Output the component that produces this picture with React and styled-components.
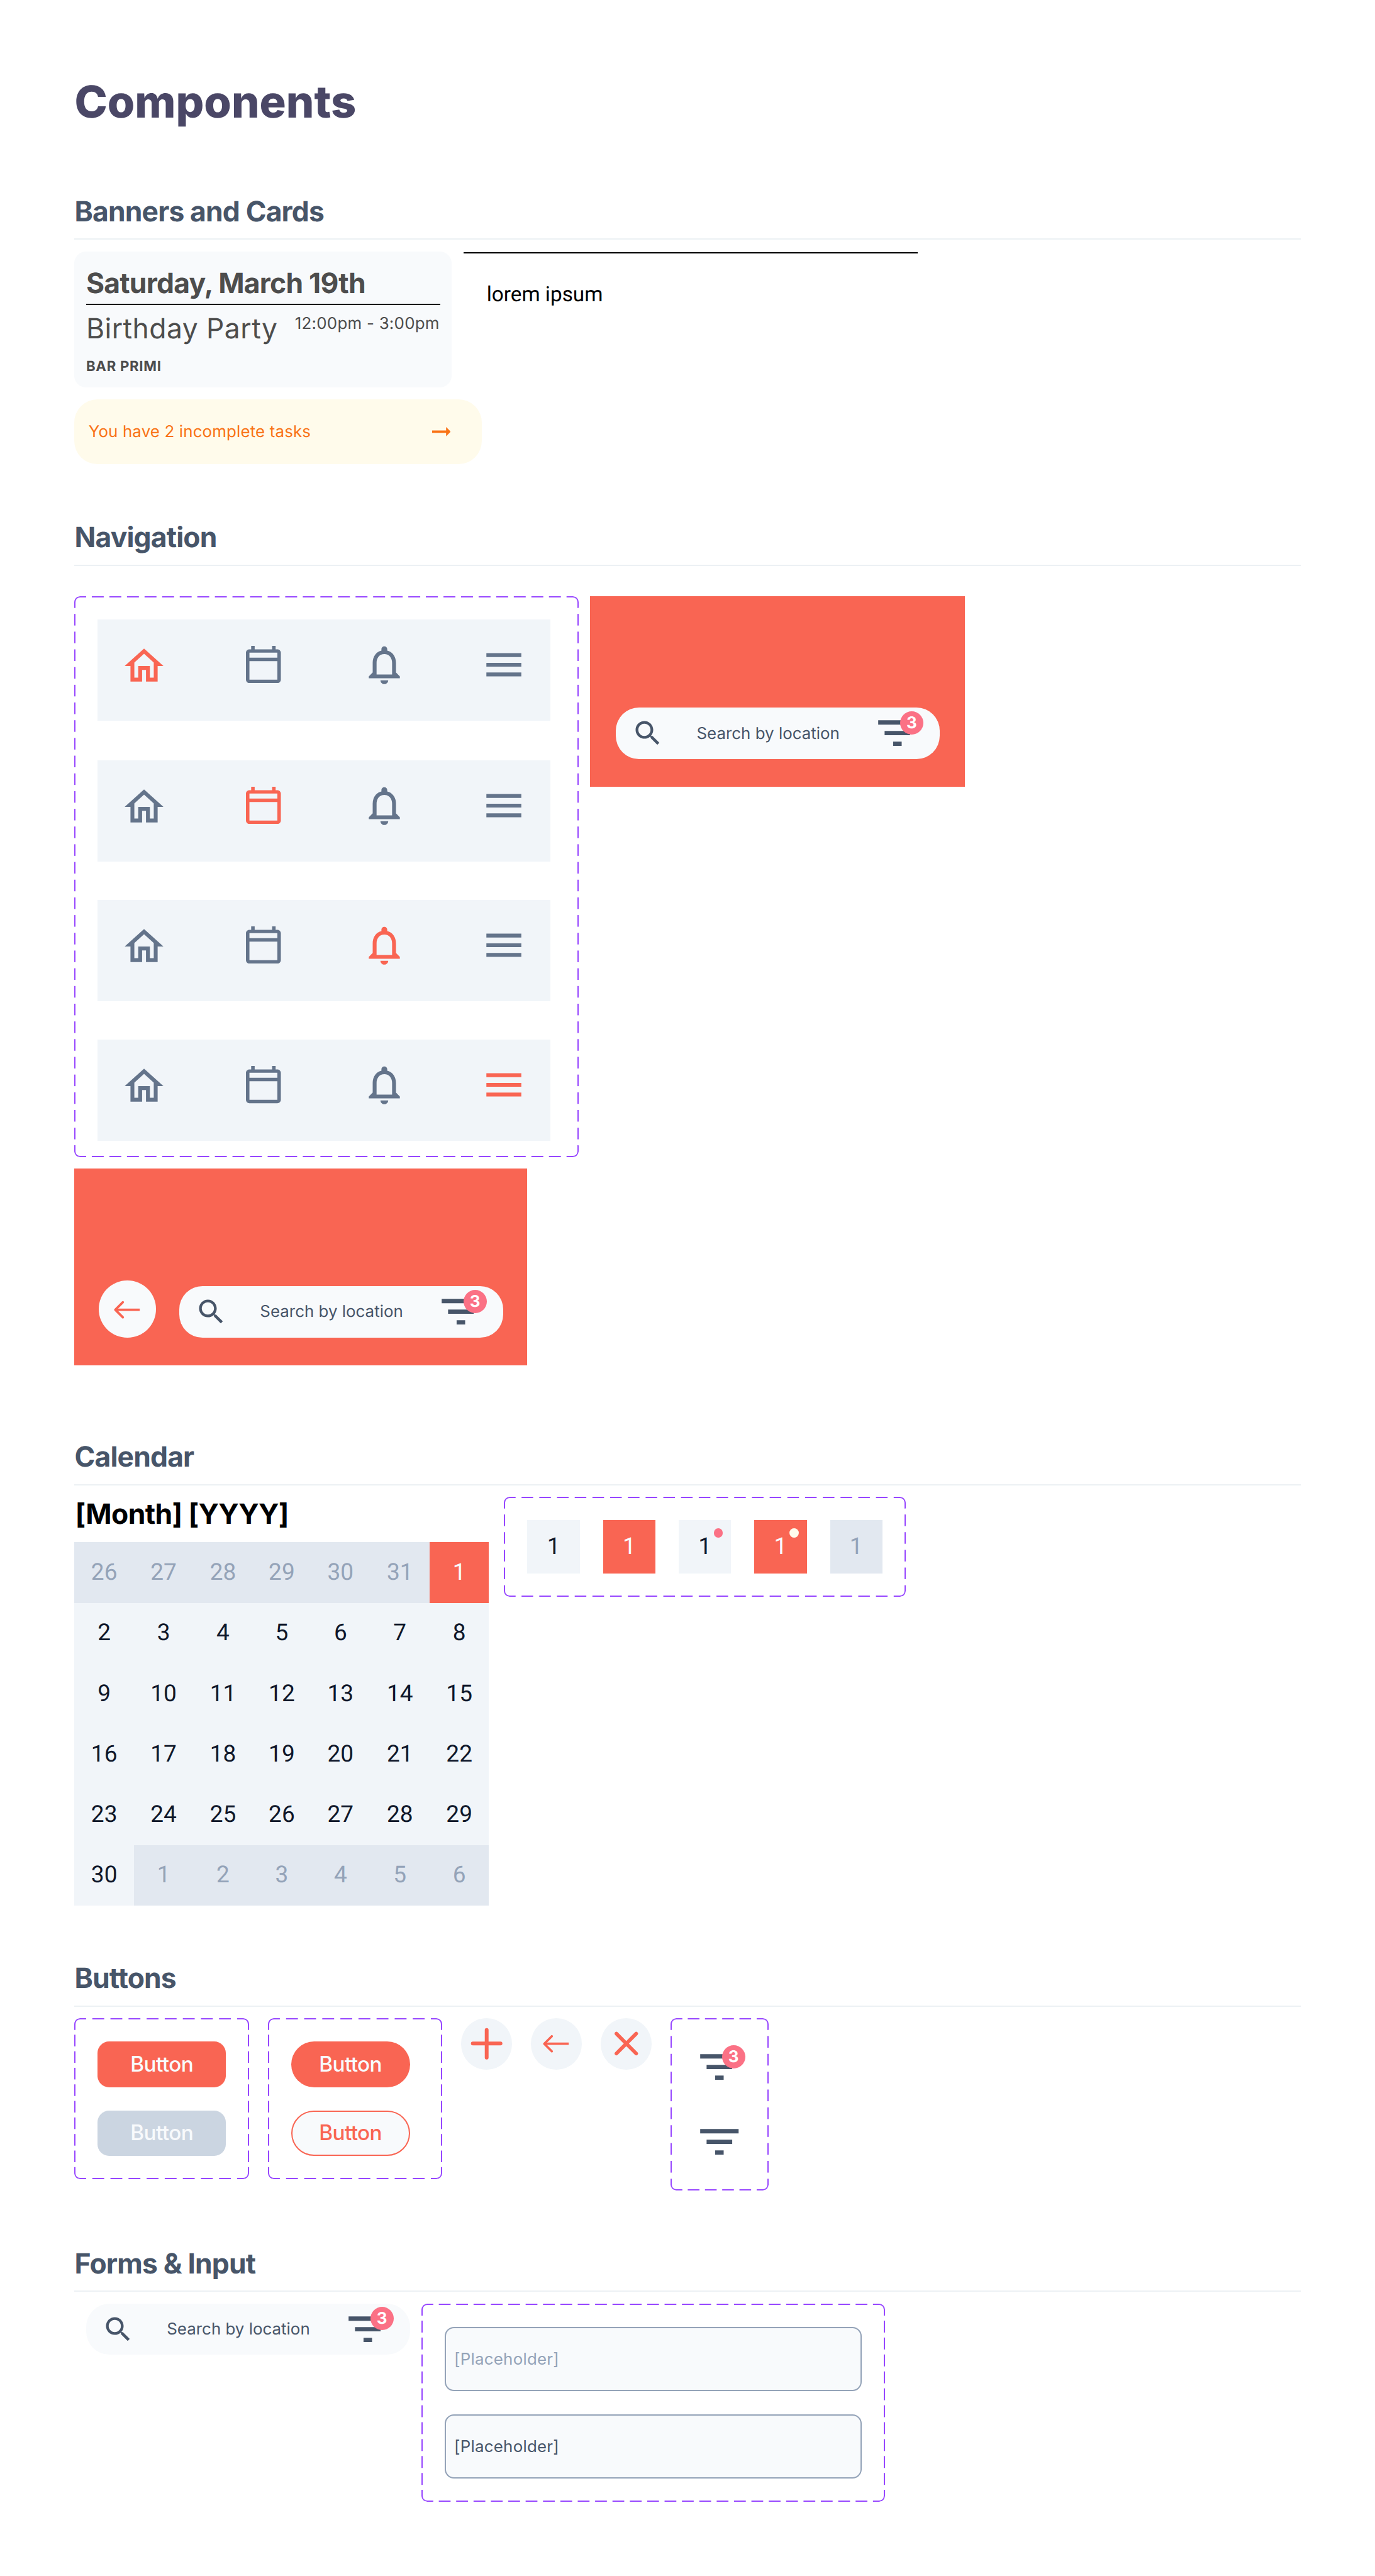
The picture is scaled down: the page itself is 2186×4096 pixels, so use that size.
import React from 'react';
import styled, { createGlobalStyle, css } from 'styled-components';

const SCALE = 2186 / 2362;
const u = (n) => `${+(n * SCALE).toFixed(3)}px`;

const c = {
  coral: '#f96553',
  rose: '#fb7185',
  cream: '#fffbeb',
  orange: '#f97316',
  purple: '#9747ff',
  ink: '#0f172a',
  slate600: '#475569',
  slate500: '#64748b',
  slate400: '#94a3b8',
  slate300: '#cbd5e1',
  slate200: '#e2e8f0',
  slate100: '#f1f5f9',
  slate50: '#f8fafc',
  divider: '#ecf1f4',
  grey: '#4d4d4d',
  title: '#4a4766',
};

const GlobalStyle = createGlobalStyle`
  *, *::before, *::after { box-sizing: border-box; }
  body {
    margin: 0;
    background: #fff;
    font-family: Inter, "Liberation Sans", sans-serif;
    text-rendering: geometricPrecision;
    color: ${c.ink};
  }
  h1, h2, h3, p { margin: 0; }
`;

const Page = styled.main`
  height: ${u(4426)};
  overflow: hidden;
  padding: ${u(130)} ${u(128)} 0;
`;

const PageTitle = styled.h1`
  height: ${u(203)};
  font-size: ${u(76)};
  line-height: ${u(90)};
  font-weight: 800;
  color: ${c.title};
`;

const Section = styled.section`
  margin-bottom: ${u(95)};
  padding-bottom: ${({ $bottom }) => u($bottom ?? 0)};
`;

const SectionTitle = styled.h2`
  height: ${u(79)};
  margin-bottom: ${u(20)};
  padding-top: ${u(1.5)};
  border-bottom: 2px solid ${c.divider};
  font-size: ${u(48)};
  line-height: ${u(58)};
  font-weight: 700;
  letter-spacing: -0.019em;
  color: ${c.slate600};
`;

const Row = styled.div`
  display: flex;
  align-items: flex-start;
  gap: ${({ $gap }) => u($gap ?? 20)};
  margin-top: ${({ $top }) => u($top ?? 0)};
`;

/* Dashed component-set outline: a solid rounded border, cut into dashes by a mask. */
const Frame = styled.div`
  position: relative;
  display: flex;
  flex-direction: ${({ $row }) => ($row ? 'row' : 'column')};
  align-items: flex-start;
  gap: ${u(40)};
  flex: none;
  width: ${({ $w }) => u($w)};
  height: ${({ $h }) => u($h)};
  padding: ${u(40)};

  &::before {
    content: '';
    position: absolute;
    inset: 0;
    border: 2px solid ${c.purple};
    border-radius: ${u(10)};
    pointer-events: none;
    ${({ $w, $h }) => {
      const px = ($w - 20) / Math.round(($w - 20) / 30);
      const py = ($h - 20) / Math.round(($h - 20) / 30);
      const h = `linear-gradient(90deg, #000 ${u(20)}, transparent 0)`;
      const v = `linear-gradient(180deg, #000 ${u(20)}, transparent 0)`;
      const solid = 'linear-gradient(#000, #000)';
      const corner = `${u(20)} ${u(20)}`;
      return css`
        mask-image: ${h}, ${h}, ${v}, ${v}, ${solid}, ${solid}, ${solid}, ${solid};
        mask-size: ${u(px)} 3px, ${u(px)} 3px, 3px ${u(py)}, 3px ${u(py)}, ${corner}, ${corner}, ${corner}, ${corner};
        mask-position: left top, left bottom, left top, right top, left top, right top, left bottom, right bottom;
        mask-repeat: repeat-x, repeat-x, repeat-y, repeat-y, no-repeat, no-repeat, no-repeat, no-repeat;
      `;
    }}
  }
`;

const Icon = styled.svg`
  display: block;
  flex: none;
  width: ${({ $w }) => u($w)};
  height: ${({ $h, $w }) => u($h ?? $w)};
  fill: currentColor;
`;

/* ---------- Banners and cards ---------- */

const EventCard = styled.article`
  width: ${u(648)};
  height: ${u(234)};
  padding: ${u(28)} ${u(20)} 0;
  border-radius: ${u(20)};
  background: ${c.slate50};
  color: ${c.grey};
`;

const EventDate = styled.h3`
  height: ${u(64)};
  border-bottom: 2px solid #000;
  font-size: ${u(48)};
  line-height: ${u(54)};
  font-weight: 700;
  letter-spacing: -0.017em;
`;

const EventRow = styled.div`
  display: flex;
  justify-content: space-between;
  height: ${u(88)};
  padding-top: ${u(12)};
`;

const EventName = styled.p`
  font-size: ${u(48)};
  line-height: ${u(58)};
  letter-spacing: ${u(0.5)};
`;

const EventTime = styled.p`
  padding-top: ${u(3)};
  padding-right: ${u(1)};
  font-size: ${u(28)};
  line-height: ${u(34)};
  letter-spacing: ${u(0.25)};
`;

const EventPlace = styled.p`
  padding-top: ${u(3)};
  font-size: ${u(24)};
  line-height: ${u(30)};
  font-weight: 700;
  letter-spacing: 0.032em;
`;

const TextPanel = styled.div`
  width: ${u(780)};
  margin-top: ${u(1)};
  padding: ${u(51)} ${u(40)} 0;
  border-top: 2px solid #000;
  font: 400 ${u(36)} / ${u(42)} Roboto, "Liberation Sans", sans-serif;
  color: #000;
`;

const Banner = styled.div`
  display: flex;
  align-items: center;
  justify-content: space-between;
  width: ${u(700)};
  height: ${u(112)};
  padding: 0 ${u(54)} 0 ${u(24)};
  border-radius: ${u(40)};
  background: ${c.cream};
  color: ${c.orange};
  font-size: ${u(28)};
  letter-spacing: ${u(0.14)};
`;

/* ---------- Navigation ---------- */

const NavFrame = styled(Frame)`
  gap: ${u(66)};
`;

const NavBar = styled.nav`
  display: flex;
  justify-content: space-between;
  flex: none;
  width: ${u(778)};
  height: ${u(174)};
  padding: ${u(38)} ${u(40)} 0;
  background: ${c.slate100};

  &:first-child { margin-bottom: ${u(2)}; }
`;

const NavItem = styled.span`
  display: flex;
  justify-content: center;
  width: ${u(80)};
  height: ${u(80)};
  padding-top: ${({ $top }) => u($top ?? 0)};
  padding-right: ${({ $nudge }) => u($nudge ?? 0)};
  color: ${({ $active }) => ($active ? c.coral : c.slate500)};
`;

const Header = styled.div`
  display: flex;
  align-items: flex-end;
  flex: none;
  gap: ${u(40)};
  width: ${({ $w }) => u($w)};
  height: ${({ $h }) => u($h)};
  padding: 0 0 ${u(48)} ${({ $left }) => u($left)};
  background: ${c.coral};
`;

const SearchPill = styled.div`
  display: flex;
  align-items: center;
  justify-content: space-between;
  flex: none;
  width: ${u(556)};
  height: ${u(88)};
  padding: 0 ${u(28)} 0 ${u(27)};
  border-radius: ${u(40)};
  background: ${c.slate50};
  color: ${c.slate600};
  font-size: ${u(28)};

  ${({ $inset }) => $inset && css`margin-left: ${u(20)};`}
`;

const Circle = styled.span`
  display: flex;
  align-items: center;
  justify-content: center;
  flex: none;
  width: ${({ $size }) => u($size)};
  height: ${({ $size }) => u($size)};
  border-radius: 50%;
  background: ${({ $light }) => ($light ? c.slate50 : c.slate100)};
  color: ${c.coral};
`;

const FilterBox = styled.span`
  position: relative;
  display: block;
  width: ${u(88)};
  height: ${u(88)};
  color: ${c.slate600};
`;

const Badge = styled.span`
  position: absolute;
  top: ${u(6)};
  right: 0;
  width: ${u(40)};
  height: ${u(40)};
  border-radius: 50%;
  background: ${c.rose};
  color: #fff;
  font-size: ${u(28)};
  line-height: ${u(40)};
  font-weight: 700;
  text-align: center;
`;

/* ---------- Calendar ---------- */

const MonthTitle = styled.h3`
  height: ${u(78)};
  padding: ${u(0.5)} 0 0 ${u(1)};
  font-size: ${u(48)};
  line-height: ${u(58)};
  font-weight: 700;
  letter-spacing: ${u(-0.68)};
  color: #000;
`;

const MonthGrid = styled.div`
  display: grid;
  grid-template-columns: repeat(3, ${u(102)}) ${u(100)} repeat(3, ${u(102)});
  grid-auto-rows: ${u(104)};
`;

const tones = {
  normal: css`background: ${c.slate100}; color: ${c.ink};`,
  active: css`background: ${c.coral}; color: ${c.slate50};`,
  muted: css`background: ${c.slate200}; color: ${c.slate400};`,
};

const Day = styled.span`
  display: flex;
  align-items: center;
  justify-content: center;
  padding-top: 1.5px;
  font: 400 ${u(40)} / ${u(48)} Roboto, "Liberation Sans", sans-serif;
  ${({ $tone }) => tones[$tone]}
`;

const DayVariant = styled(Day)`
  position: relative;
  width: ${u(90)};
  height: ${u(92)};
`;

const Dot = styled.i`
  position: absolute;
  top: ${u(14)};
  left: ${u(60)};
  width: ${u(16)};
  height: ${u(16)};
  border-radius: 50%;
  background: ${({ $light }) => ($light ? c.cream : c.rose)};
`;

/* ---------- Buttons and inputs ---------- */

const Button = styled.button`
  flex: none;
  width: ${({ $pill }) => u($pill ? 204 : 220)};
  height: ${u(78)};
  padding: 0;
  border: ${({ $outline }) => ($outline ? `2px solid ${c.coral}` : 0)};
  border-radius: ${({ $pill }) => u($pill ? 40 : 20)};
  background: ${({ $outline, disabled }) => ($outline ? c.slate50 : disabled ? c.slate300 : c.coral)};
  color: ${({ $outline }) => ($outline ? c.coral : c.slate50)};
  font: 500 ${u(36)} / 1 Inter, "Liberation Sans", sans-serif;
  letter-spacing: -0.018em;
`;

const Input = styled.input`
  display: block;
  flex: none;
  width: ${u(716)};
  height: ${u(110)};
  padding: 0 ${u(14)};
  border: 2px solid ${c.slate400};
  border-radius: ${u(16)};
  outline: 0;
  background: ${c.slate50};
  color: ${c.slate600};
  font: 400 ${u(28)} / 1.2 Inter, "Liberation Sans", sans-serif;
  letter-spacing: ${u(0.25)};

  &::placeholder { color: ${c.slate400}; opacity: 1; }
`;

const HomeIcon = () => (
  <Icon $w={80} viewBox="0 0 24 24">
    <path d="M12 5.69l5 4.5V18h-2v-6H9v6H7v-7.81l5-4.5M12 3L2 12h3v8h6v-6h2v6h6v-8h3L12 3z" />
  </Icon>
);
const CalendarIcon = () => (
  <Icon $w={60} $h={64} viewBox="2 1 20 22" preserveAspectRatio="none">
    <path d="M20 3h-1V1h-2v2H7V1H5v2H4c-1.1 0-2 .9-2 2v16c0 1.1.9 2 2 2h16c1.1 0 2-.9 2-2V5c0-1.1-.9-2-2-2zm0 18H4V10h16v11zm0-13H4V5h16v3z" />
  </Icon>
);
const BellIcon = () => (
  <Icon $w={80} viewBox="0 0 24 24">
    <path d="M12 22c1.1 0 2-.9 2-2h-4c0 1.1.9 2 2 2zm6-6v-5c0-3.07-1.63-5.64-4.5-6.32V4c0-.83-.67-1.5-1.5-1.5s-1.5.67-1.5 1.5v.68C7.64 5.36 6 7.92 6 11v5l-2 2v1h16v-1l-2-2zm-2 1H8v-6c0-2.48 1.51-4.5 4-4.5s4 2.02 4 4.5v6z" />
  </Icon>
);
const MenuIcon = () => (
  <Icon $w={80} viewBox="0 0 24 24">
    <path d="M3 18h18v-2H3v2zm0-5h18v-2H3v2zm0-7v2h18V6H3z" />
  </Icon>
);
const SearchIcon = () => (
  <Icon $w={56} viewBox="0 0 24 24">
    <path d="M15.5 14h-.79l-.28-.27C15.41 12.59 16 11.11 16 9.5 16 5.91 13.09 3 9.5 3S3 5.91 3 9.5 5.91 16 9.5 16c1.61 0 3.09-.59 4.23-1.57l.27.28v.79l5 4.99L20.49 19l-4.99-5zm-6 0C7.01 14 5 11.99 5 9.5S7.01 5 9.5 5 14 7.01 14 9.5 11.99 14 9.5 14z" />
  </Icon>
);
const ArrowRightIcon = () => (
  <Icon $w={32} $h={16} viewBox="4 8 16 8">
    <path d="M16.01 11H4v2h12.01v3L20 12l-3.99-4v3z" />
  </Icon>
);
const StrokeIcon = ({ d, width, shift = 0 }) => (
  <Icon $w={88} viewBox="0 0 88 88">
    <g fill="none" stroke="currentColor" strokeWidth={width} transform={`translate(0 ${shift})`}>
      {d.map(([path, cap]) => (
        <path key={path} d={path} strokeLinecap={cap} strokeLinejoin="round" />
      ))}
    </g>
  </Icon>
);
const BackIcon = ({ shift }) => (
  <StrokeIcon width={4} shift={shift} d={[['M65 44H23', 'butt'], ['M36 31L23 44L36 57', 'round']]} />
);
const PlusIcon = () => (
  <StrokeIcon width={6.5} d={[['M44 20.2V67.8M20.2 43.6H67.8', 'round']]} />
);
const CloseIcon = () => (
  <StrokeIcon width={6.2} d={[['M27 26.6L61 60.8M61 26.6L27 60.8', 'round']]} />
);

const Filter = ({ count }) => (
  <FilterBox>
    <Icon $w={88} viewBox="0 0 24 24">
      <path d="M10 18h4v-2h-4v2zM3 6v2h18V6H3zm3 7h12v-2H6v2z" />
    </Icon>
    {count && <Badge>{count}</Badge>}
  </FilterBox>
);

const Search = ({ inset }) => (
  <SearchPill $inset={inset}>
    <SearchIcon />
    <span>Search by location</span>
    <Filter count={3} />
  </SearchPill>
);

const navItems = [
  { name: 'home', Glyph: HomeIcon, top: 2 },
  { name: 'calendar', Glyph: CalendarIcon, top: 8, nudge: 2 },
  { name: 'alerts', Glyph: BellIcon },
  { name: 'menu', Glyph: MenuIcon },
];

const monthDays = [
  ...[26, 27, 28, 29, 30, 31].map((day) => ({ day, tone: 'muted' })),
  ...Array.from({ length: 30 }, (_, i) => ({ day: i + 1, tone: i === 0 ? 'active' : 'normal' })),
  ...[1, 2, 3, 4, 5, 6].map((day) => ({ day, tone: 'muted' })),
];

const dayVariants = [
  { tone: 'normal' },
  { tone: 'active' },
  { tone: 'normal', dot: true },
  { tone: 'active', dot: true },
  { tone: 'muted' },
];

export default function App() {
  return (
    <>
      <GlobalStyle />
      <Page>
        <PageTitle>Components</PageTitle>

        <Section>
          <SectionTitle>Banners and Cards</SectionTitle>
          <Row>
            <EventCard>
              <EventDate>Saturday, March 19th</EventDate>
              <EventRow>
                <EventName>Birthday Party</EventName>
                <EventTime>12:00pm - 3:00pm</EventTime>
              </EventRow>
              <EventPlace>BAR PRIMI</EventPlace>
            </EventCard>
            <TextPanel>lorem ipsum</TextPanel>
          </Row>
          <Row $top={20}>
            <Banner>
              <span>You have 2 incomplete tasks</span>
              <ArrowRightIcon />
            </Banner>
          </Row>
        </Section>

        <Section $bottom={32}>
          <SectionTitle>Navigation</SectionTitle>
          <Row $top={52}>
            <NavFrame $w={866} $h={964}>
              {navItems.map((active) => (
                <NavBar key={active.name}>
                  {navItems.map(({ name, Glyph, top, nudge }) => (
                    <NavItem key={name} $top={top} $nudge={nudge} $active={name === active.name}>
                      <Glyph />
                    </NavItem>
                  ))}
                </NavBar>
              ))}
            </NavFrame>
            <Header $w={644} $h={328} $left={44}>
              <Search />
            </Header>
          </Row>
          <Row $top={20}>
            <Header $w={778} $h={338} $left={42}>
              <Circle $size={98} $light><BackIcon shift={1} /></Circle>
              <Search />
            </Header>
          </Row>
        </Section>

        <Section>
          <SectionTitle>Calendar</SectionTitle>
          <Row $gap={26}>
            <div>
              <MonthTitle>[Month] [YYYY]</MonthTitle>
              <MonthGrid>
                {monthDays.map(({ day, tone }, i) => (
                  <Day key={i} $tone={tone}>{day}</Day>
                ))}
              </MonthGrid>
            </div>
            <Frame $row $w={690} $h={172}>
              {dayVariants.map(({ tone, dot }, i) => (
                <DayVariant key={i} $tone={tone}>
                  1{dot && <Dot $light={tone === 'active'} />}
                </DayVariant>
              ))}
            </Frame>
          </Row>
        </Section>

        <Section>
          <SectionTitle>Buttons</SectionTitle>
          <Row $gap={32}>
            <Frame $w={300} $h={276}>
              <Button>Button</Button>
              <Button disabled>Button</Button>
            </Frame>
            <Frame $w={300} $h={276}>
              <Button $pill>Button</Button>
              <Button $pill $outline>Button</Button>
            </Frame>
            <Circle $size={88}><PlusIcon /></Circle>
            <Circle $size={88}><BackIcon /></Circle>
            <Circle $size={88}><CloseIcon /></Circle>
            <Frame $w={168} $h={296}>
              <Filter count={3} />
              <Filter />
            </Frame>
          </Row>
        </Section>

        <Section>
          <SectionTitle>Forms &amp; Input</SectionTitle>
          <Row>
            <Search inset />
            <Frame $w={796} $h={340}>
              <Input placeholder="[Placeholder]" />
              <Input defaultValue="[Placeholder]" />
            </Frame>
          </Row>
        </Section>
      </Page>
    </>
  );
}
